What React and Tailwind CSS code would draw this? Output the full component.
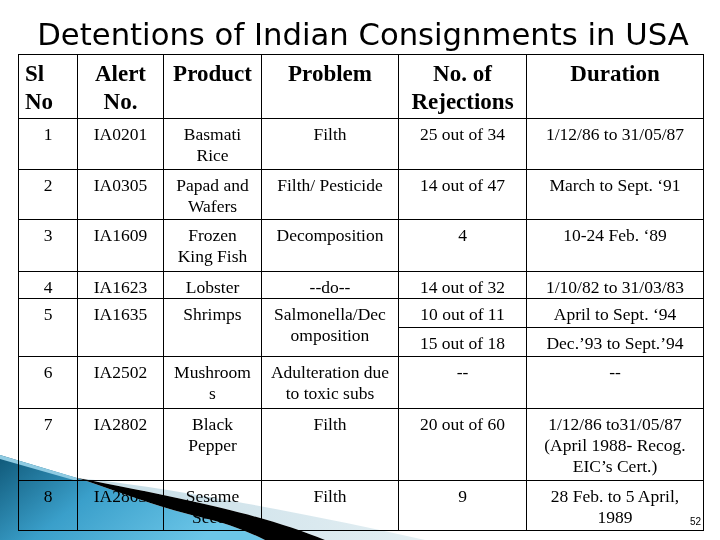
import React from 'react';

// Detentions table slide
const rows = [
  { sl: '1', alert: 'IA0201', product: ['Basmati', 'Rice'], problem: ['Filth'], count: ['25 out of 34'], duration: ['1/12/86 to 31/05/87'], h: 'h-[51px]' },
  { sl: '2', alert: 'IA0305', product: ['Papad and', 'Wafers'], problem: ['Filth/ Pesticide'], count: ['14 out of 47'], duration: ['March to Sept. \u201891'], h: 'h-[50px]' },
  { sl: '3', alert: 'IA1609', product: ['Frozen', 'King Fish'], problem: ['Decomposition'], count: ['4'], duration: ['10-24 Feb. \u201889'], h: 'h-[52px]' },
  { sl: '4', alert: 'IA1623', product: ['Lobster'], problem: ['--do--'], count: ['14 out of 32'], duration: ['1/10/82 to 31/03/83'], h: 'h-[27px]' },
];

const rowsAfter = [
  { sl: '6', alert: 'IA2502', product: ['Mushroom', 's'], problem: ['Adulteration due', 'to toxic subs'], count: ['--'], duration: ['--'], h: 'h-[52px]' },
  { sl: '7', alert: 'IA2802', product: ['Black', 'Pepper'], problem: ['Filth'], count: ['20 out of 60'], duration: ['1/12/86 to31/05/87', '(April 1988- Recog.', 'EIC\u2019s Cert.)'], h: 'h-[72px]' },
  { sl: '8', alert: 'IA2803', product: ['Sesame', 'Seeds'], problem: ['Filth'], count: ['9'], duration: ['28 Feb. to 5 April,', '1989'], h: 'h-[50px]' },
];

const td = 'border border-black align-top text-center px-1 pt-[5px] whitespace-nowrap';
const th = 'border border-black align-top text-center px-1 pt-[5px] font-bold whitespace-nowrap';

const Lines = ({ lines }) =>
  lines.map((l, i) => (
    <React.Fragment key={i}>
      {i > 0 && <br />}
      {l}
    </React.Fragment>
  ));

const Row = ({ r }) => (
  <tr className={r.h}>
    <td className={td}>{r.sl}</td>
    <td className={td}>{r.alert}</td>
    <td className={td}><Lines lines={r.product} /></td>
    <td className={td}><Lines lines={r.problem} /></td>
    <td className={td}><Lines lines={r.count} /></td>
    <td className={td}><Lines lines={r.duration} /></td>
  </tr>
);

const Swoosh = () => (
  <svg
    className="absolute left-0 bottom-0 mix-blend-multiply pointer-events-none"
    width="480"
    height="100"
    viewBox="0 0 480 100"
  >
    <defs>
      <linearGradient id="blue" x1="0" y1="0" x2="1" y2="0.4">
        <stop offset="0" stopColor="#0f5878" />
        <stop offset="0.45" stopColor="#3a9fca" />
        <stop offset="1" stopColor="#6cc6e8" />
      </linearGradient>
      <linearGradient id="pale" x1="0" y1="0" x2="1" y2="0">
        <stop offset="0" stopColor="#c4dce6" />
        <stop offset="1" stopColor="#e4eff3" />
      </linearGradient>
    </defs>
    <path d="M0 15 L77 38 C120 52 160 68 200 77 C225 83 245 90 265 100 L0 100 Z" fill="url(#blue)" />
    <path d="M0 15 L77 38 L77 41 L0 19 Z" fill="#8fcbe2" />
    <path d="M77 38 C160 46 300 72 425 100 L325 100 C290 86 250 74 200 63 C150 52 110 44 77 38 Z" fill="url(#pale)" />
    <path d="M77 38 C110 44 150 52 200 63 C250 74 290 86 325 100 L265 100 C245 90 225 83 200 77 C160 68 120 52 77 38 Z" fill="#000" />
  </svg>
);

export default function App() {
  return (
    <div className="relative w-[720px] h-[540px] overflow-hidden bg-white">
      <h1 className="pt-[17px] text-center text-[30.7px] leading-[36px] text-black font-['DejaVu_Sans',sans-serif] pl-[6px]">
        Detentions of Indian Consignments in USA
      </h1>
      <table className="ml-[18px] mt-[1px] w-[685px] table-fixed border-collapse text-black font-['Liberation_Serif',serif] text-[17.5px] leading-[21px]">
        <colgroup>
          <col className="w-[59px]" />
          <col className="w-[86px]" />
          <col className="w-[98px]" />
          <col className="w-[137px]" />
          <col className="w-[128px]" />
          <col className="w-[177px]" />
        </colgroup>
        <thead>
          <tr className="h-[64px] text-[23px] leading-[28px]">
            <th className={`${th} !text-left pl-[6px]`}>Sl<br />No</th>
            <th className={th}>Alert<br />No.</th>
            <th className={th}>Product</th>
            <th className={th}>Problem</th>
            <th className={th}>No. of<br />Rejections</th>
            <th className={th}>Duration</th>
          </tr>
        </thead>
        <tbody>
          {rows.map((r) => (
            <Row key={r.sl} r={r} />
          ))}
          <tr className="h-[29px]">
            <td rowSpan={2} className={td}>5</td>
            <td rowSpan={2} className={td}>IA1635</td>
            <td rowSpan={2} className={td}>Shrimps</td>
            <td rowSpan={2} className={td}>Salmonella/Dec<br />omposition</td>
            <td className={td}>10 out of 11</td>
            <td className={td}>April to Sept. {'\u201894'}</td>
          </tr>
          <tr className="h-[29px]">
            <td className={td}>15 out of 18</td>
            <td className={td}>Dec.{'\u201993'} to Sept.{'\u201994'}</td>
          </tr>
          {rowsAfter.map((r) => (
            <Row key={r.sl} r={r} />
          ))}
        </tbody>
      </table>
      <Swoosh />
      <span className="absolute left-[690px] top-[516px] text-[10px] leading-[12px] text-black font-['Liberation_Sans',sans-serif]">
        52
      </span>
    </div>
  );
}
